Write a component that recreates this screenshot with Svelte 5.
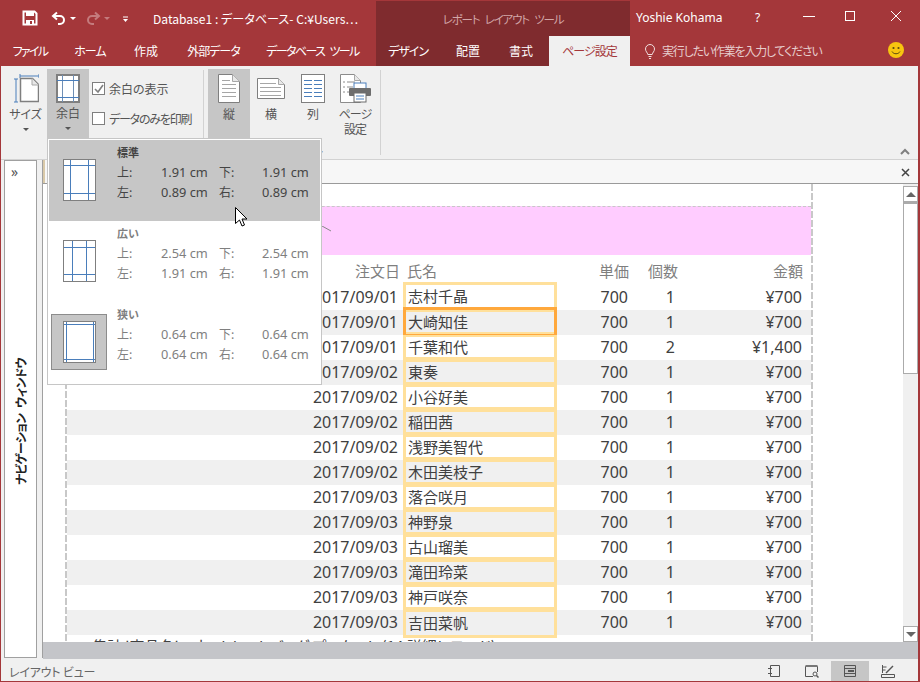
<script>
  const tabsLeft = [
    ['ファイル', 'w60 kana tight'], ['ホーム', 'w60 kana'], ['作成', 'w52'], ['外部データ', 'w83 kana'], ['データベース ツール', 'w115 kana']
  ];
  const tabsCtx = [['デザイン', 'w64 kana'], ['配置', 'w56'], ['書式', 'w53 nudge']];
  const names = ['志村千晶','大崎知佳','千葉和代','東奏','小谷好美','稲田茜','浅野美智代','木田美枝子','落合咲月','神野泉','古山瑠美','滝田玲菜','神戸咲奈','吉田菜帆'];
  const rows = names.map((name, i) => ({
    name,
    date: i < 3 ? '2017/09/01' : i < 8 ? '2017/09/02' : '2017/09/03',
    qty: i === 2 ? 2 : 1,
    amt: i === 2 ? '¥1,400' : '¥700'
  }));
  const margins = [
    { title: '標準', a: '1.91', b: '1.91', c: '0.89', d: '0.89', v: [7, 25], h: [6, 34], cls: 'hover' },
    { title: '広い', a: '2.54', b: '2.54', c: '1.91', d: '1.91', v: [9, 23], h: [7, 34], cls: '' },
    { title: '狭い', a: '0.64', b: '0.64', c: '0.64', d: '0.64', v: [3, 30], h: [3, 38], cls: 'current' }
  ];
</script>

<div class="win">
  <div class="titlebar">
    <div class="qat">
      <svg class="save" width="16" height="16" viewBox="0 0 16 16"><path d="M1.500 1.500h11l2 2v11h-13z" fill="none" stroke="#fff" stroke-width="2"/><rect x="4" y="2" width="8" height="4" fill="#fff"/><rect x="4" y="10" width="8" height="5" fill="#fff"/><rect x="8" y="11" width="2" height="3" fill="#a4373a"/></svg>
      <svg class="undo" width="16" height="14" viewBox="0 0 16 14"><path d="M6 1.500 2 5l4 3.500M2.500 5H9a4 4 0 0 1 0 8H7" fill="none" stroke="#fff" stroke-width="2"/></svg>
      <i class="drop"></i>
      <svg class="redo" width="16" height="14" viewBox="0 0 16 14"><path d="M10 1.500 14 5l-4 3.500M13.500 5H7a4 4 0 0 0 0 8h2" fill="none" stroke="#c47b7d" stroke-width="2"/></svg>
      <i class="drop dim"></i>
      <svg class="custom" width="7" height="7" viewBox="0 0 7 7"><path d="M1 1h5" stroke="#fff"/><path d="M1 3h5L3.500 6z" fill="#fff"/></svg>
    </div>
    <div class="doc-title">Database1 : データベース- C:¥Users⋯</div>
    <div class="ctx-title">レポート レイアウト ツール</div>
    <div class="user">Yoshie Kohama</div>
    <div class="help">?</div>
    <svg class="winbtns" width="108" height="14" viewBox="0 0 108 14"><path d="M0 7.500h12" stroke="#fff"/><rect x="42.500" y="2.500" width="9" height="9" fill="none" stroke="#fff"/><path d="M88 2l10 10M98 2 88 12" stroke="#fff" fill="none"/></svg>
  </div>

  <div class="tabs">
    {#each tabsLeft as t}<div class="tab {t[1]}">{t[0]}</div>{/each}
    <div class="tabgap"></div>
    {#each tabsCtx as t}<div class="tab ctx {t[1]}">{t[0]}</div>{/each}
    <div class="tab active kana">ページ設定</div>
    <svg class="bulb" width="12" height="15" viewBox="0 0 12 15"><path d="M3.800 10.500C3.500 8.500 1.500 7.500 1.500 5a4.500 4.500 0 0 1 9 0c0 2.500-2 3.500-2.300 5.500zM4.500 12.500h3M5 14.500h2" fill="none" stroke="#f1dfdf"/></svg>
    <div class="tell">実行したい作業を入力してください</div>
    <svg class="smile" width="16" height="16" viewBox="0 0 16 16"><circle cx="8" cy="8" r="8" fill="#f7c50f"/><circle cx="5.500" cy="6" r="1.100" fill="#5b4a10"/><circle cx="10.500" cy="6" r="1.100" fill="#5b4a10"/><path d="M4 9.500c1.500 3 6.500 3 8 0" fill="none" stroke="#5b4a10"/></svg>
  </div>

  <div class="ribbon">
    <div class="rbtn r-size">
      <svg width="26" height="30" viewBox="0 0 26 30"><path d="M7 2h19M7 0v4M26 0v4M3 5v23M1 5h4M1 28h4" stroke="#4a7ebb" fill="none"/><path d="M7.500 4.500h12l6 6v17h-18z" fill="#fff" stroke="#7f7f7f" stroke-width="1.500"/><path d="M19 4.500v6.500h6.500" fill="#e8e8e8" stroke="#a8a8a8"/></svg>
      <span>サイズ</span><i class="caret"></i>
    </div>
    <div class="rbtn r-margin pressed">
      <svg width="24" height="29" viewBox="0 0 24 29"><rect x="1" y="1" width="22" height="27" fill="#fff" stroke="#7f7f7f" stroke-width="2"/><path d="M6.500 1v27M17.500 1v27" stroke="#6f8fb5"/><path d="M1 6.500h22M1 23.500h22" stroke="#4a7ebb"/></svg>
      <span>余白</span><i class="caret"></i>
    </div>
    <div class="checks">
      <label class="chk"><span class="box"><svg width="12" height="12" viewBox="0 0 12 12"><path d="M2 6l3 3 5-7" fill="none" stroke="#7f7f7f" stroke-width="1.600"/></svg></span>余白の表示</label>
      <label class="chk kana narrow"><span class="box"></span>データのみを印刷</label>
    </div>
    <div class="sep s1"></div>
    <div class="rbtn r-o pressed">
      <svg width="22" height="29" viewBox="0 0 22 29"><path d="M.5.500h14l7 7v21H.5z" fill="#fff" stroke="#7f7f7f"/><path d="M14.500.500v7h7" fill="#e8e8e8" stroke="#a8a8a8"/><path d="M4 6.500h8M4 10.500h14M4 14.500h14M4 18.500h14M4 22.500h14" stroke="#a6a6a6"/></svg>
      <span>縦</span>
    </div>
    <div class="rbtn r-o">
      <svg width="28" height="21" viewBox="0 0 28 21"><path d="M.5.500h21l6 6v14H.5z" fill="#fff" stroke="#7f7f7f"/><path d="M21.500.500v6h6" fill="#e8e8e8" stroke="#a8a8a8"/><path d="M3 5.500h16M3 9.500h21M3 13.500h21M3 17.500h21" stroke="#a6a6a6"/></svg>
      <span>横</span>
    </div>
    <div class="rbtn r-o">
      <svg width="24" height="29" viewBox="0 0 24 29"><rect x=".5" y=".5" width="23" height="28" fill="#fff" stroke="#7f7f7f"/><path d="M3 6.500h8M13 6.500h8M3 10.500h8M13 10.500h8M3 14.500h8M13 14.500h8M3 18.500h8M13 18.500h8M3 22.500h8M13 22.500h8" stroke="#4a7ebb" stroke-width="1.200"/></svg>
      <span>列</span>
    </div>
    <div class="rbtn r-o">
      <svg class="setup" width="32" height="29" viewBox="0 0 32 29"><path d="M.5.500h14l6 6v22H.5z" fill="#fff" stroke="#8c8c8c"/><path d="M14.500.500v6h6" fill="#e8e8e8" stroke="#a8a8a8"/><path d="M3 8h2M7 8h8M3 13h2M7 13h6M3 18h2M7 18h6" stroke="#8c8c8c"/><rect x="14" y="9" width="12" height="7" fill="#fff" stroke="#4a7ebb"/><rect x="9" y="14" width="22" height="8" rx="1" fill="#6d6d6d"/><rect x="14" y="19" width="12" height="9" fill="#fff" stroke="#6d6d6d"/><path d="M16 22h8M16 25h8" stroke="#4a7ebb"/></svg>
      <span class="kana">ページ<br />設定</span>
    </div>
    <div class="sep s2"></div>
    <span class="grp kana">ページ レイアウト</span>
    <svg class="collapse" width="10" height="7" viewBox="0 0 10 7"><path d="M1 6l4-4 4 4" fill="none" stroke="#7f7f7f" stroke-width="2"/></svg>
  </div>

  <div class="body">
    <div class="nav">
      <div class="nav-box">
        <div class="chev">»</div>
        <div class="nav-text">ナビゲーション ウィンドウ</div>
      </div>
      <div class="nav-edge"></div>
    </div>
    <div class="work">
      <div class="strip"><i class="tabedge"></i><svg class="strip-x" width="9" height="9" viewBox="0 0 9 9"><path d="M1 1l7 7M8 1 1 8" stroke="#444" stroke-width="1.500"/></svg></div>
      <div class="docrow">
        <div class="canvas">
          <div class="page">
            <div class="band"><svg class="tick" width="10" height="6" viewBox="0 0 10 6"><path d="M0 0l9 5" stroke="#888"/></svg></div>
            <div class="grid head">
              <div class="c-date">注文日</div><div class="c-name">氏名</div><div class="c-num">単価</div><div class="c-qty">個数</div><div class="c-amt">金額</div>
            </div>
            {#each rows as r, i}
              <div class="grid row" class:odd={i % 2 === 1}>
                <div class="c-date">{r.date}</div>
                <div class="name" class:first={i === 0} class:last={i === rows.length - 1} class:sel={i === 1}>{r.name}</div>
                <div class="c-num">700</div>
                <div class="c-qty">{r.qty}</div>
                <div class="c-amt">{r.amt}</div>
              </div>
            {/each}
            <div class="foot">集計 '商品名' = ネットトートバッグ プーケット (14 詳細レコード)</div>
          </div>
        </div>
        <div class="scroll">
          <div class="sb-btn"><i class="up"></i></div>
          <div class="thumb"></div>
          <div class="sb-track"></div>
          <div class="sb-btn"><i class="down"></i></div>
        </div>
      </div>
      <div class="greyband"></div>
    </div>
  </div>

  <div class="status">
    <span class="st-text">レイアウト ビュー</span>
    <div class="views">
      <div class="vw"><svg width="14" height="14" viewBox="0 0 14 14"><path d="M3.500 1.500h9v11h-9zM1 4.500h4M1 9.500h4" fill="none" stroke="#555"/></svg></div>
      <div class="vw"><svg width="15" height="14" viewBox="0 0 15 14"><path d="M.5 2.500h12V8M.5 2.500v10H8" fill="none" stroke="#555"/><path d="M.5 1h12v2H.5z" fill="#777"/><circle cx="10" cy="10" r="2" fill="none" stroke="#555"/><path d="M11.500 11.500l2 2" stroke="#555" stroke-width="1.500"/></svg></div>
      <div class="vw on"><svg width="14" height="14" viewBox="0 0 14 14"><path d="M1.500 1.500h11v11h-11zM1.500 4.500h11M1.500 9.500h11" fill="none" stroke="#555"/><path d="M5 7h6" stroke="#555" stroke-width="2"/></svg></div>
      <div class="vw"><svg width="14" height="14" viewBox="0 0 14 14"><path d="M1.500 1v8M1.500 3h4M1.500 6h3" fill="none" stroke="#555"/><path d="M5 9l7-7" stroke="#555" stroke-width="1.500"/><path d="M.5 10.500h13v3H.5z" fill="none" stroke="#555"/></svg></div>
    </div>
  </div>

  <div class="menu">
    {#each margins as m}
      <div class="item {m.cls}">
        <div class="thumb-box">
          <svg width="33" height="42" viewBox="0 0 33 42">
            <rect x=".5" y=".5" width="32" height="41" fill="#fff" stroke="#7f7f7f"/>
            {#each m.v as x}<path d="M{x + .5} 1v40" stroke="#4a7ebb" />{/each}
            {#each m.h as y}<path d="M1 {y + .5}h31" stroke="#4a7ebb" />{/each}
          </svg>
        </div>
        <div class="info">
          <div class="ti">{m.title}</div>
          <div class="kv"><span>上:</span><b>{m.a} cm</b><span>下:</span><b>{m.b} cm</b></div>
          <div class="kv"><span>左:</span><b>{m.c} cm</b><span>右:</span><b>{m.d} cm</b></div>
        </div>
      </div>
    {/each}
  </div>

  <svg class="cursor" width="13" height="20" viewBox="0 0 13 20"><path d="M.5.500v16l4-3.500 2.500 6 2.500-1-2.500-6H12z" fill="#fff" stroke="#000"/></svg>
</div>

<style>
  :global(body) { margin: 0; background: #f0f0f0; }
  .win {
    position: relative; width: 920px; height: 682px; overflow: hidden; box-sizing: border-box;
    font-family: "Noto Sans CJK JP", "Noto Sans", sans-serif; font-size: 12px; color: #444;
    font-feature-settings: "palt"; background: #f0f0f0;
    border: 1px solid #a4373a; border-top: 0; border-right-width: 2px;
  }
  .kana { letter-spacing: -1px; }
  .narrow { letter-spacing: -1.200px; }
  .titlebar { height: 36px; margin: 0 -2px 0 -1px; background: #a4373a; display: flex; align-items: center; color: #fff; }
  .qat { width: 153px; height: 36px; display: flex; align-items: center; flex: none; }
  .save { margin-left: 22px; }
  .undo { margin-left: 13px; }
  .drop { width: 0; height: 0; border: 3px solid transparent; border-top-color: #fff; border-bottom: 0; margin-left: 3px; }
  .drop.dim { border-top-color: #c47b7d; }
  .redo { margin-left: 9px; }
  .custom { margin-left: 12px; margin-top: 2px; }
  .doc-title { width: 223px; flex: none; white-space: nowrap; overflow: hidden; font-size: 12.100px; }
  .ctx-title { width: 254px; height: 36px; flex: none; background: #7f2b2e; border-top: 1px solid #a4373a; box-sizing: border-box; text-align: center; line-height: 36px; color: #d2a6a7; font-size: 11.500px; letter-spacing: -1.200px; word-spacing: 4px; }
  .user { width: 118px; flex: none; padding-left: 6px; box-sizing: border-box; font-family: "Noto Sans", sans-serif; font-size: 12px; margin-top: -2px; }
  .help { width: 49px; flex: none; font-family: "Noto Sans", sans-serif; margin-top: -2px; margin-left: 7px; }
  .winbtns { flex: none; margin-top: -4px; margin-left: -1px; }

  .tabs { height: 30px; margin: 0 -2px 0 -1px; background: #a4373a; display: flex; color: #fff; }
  .tab { flex: none; text-align: center; line-height: 30px; box-sizing: border-box; }
  .tabgap { width: 6px; flex: none; }
  .tight { letter-spacing: -1.700px; }
  .nudge { padding-right: 3px; }
  .w60 { width: 60px; } .w52 { width: 52px; } .w83 { width: 83px; }
  .w115 { width: 115px; letter-spacing: -1.600px; word-spacing: 4px; }
  .w64 { width: 64px; } .w56 { width: 56px; } .w53 { width: 53px; }
  .ctx { background: #7f2b2e; }
  .active { width: 81px; background: #f0f0f0; color: #a4373a; }
  .bulb { margin: 8px 0 0 14px; flex: none; }
  .tell { margin-left: 6px; width: 226px; flex: none; line-height: 30px; color: #e6cccc; letter-spacing: -1.200px; }
  .smile { flex: none; margin-top: 6px; }

  .ribbon { position: relative; height: 90px; border-bottom: 1px solid #d2d2d2; display: flex; align-items: flex-start; padding-top: 3px; }
  .rbtn { display: flex; flex-direction: column; align-items: center; height: 69px; box-sizing: border-box; flex: none; line-height: 15px; text-align: center; color: #555; }
  .r-size { width: 41px; margin-left: 4px; padding-top: 5px; }
  .r-size span { margin-top: 2px; }
  .r-margin { width: 42px; margin-left: 1px; padding-top: 5px; }
  .r-margin span { margin-top: 2px; }
  .pressed { background: #c6c6c6; }
  .caret { width: 0; height: 0; border: 3px solid transparent; border-top-color: #555; border-bottom: 0; margin-top: 7px; }
  .checks { width: 111px; margin-left: 3px; padding-top: 10px; flex: none; }
  .chk { display: flex; align-items: center; height: 18px; margin-bottom: 12px; gap: 4px; color: #555; }
  .box { width: 11px; height: 11px; border: 1px solid #7f7f7f; background: #fff; display: block; flex: none; }
  .box svg { display: block; }
  .sep { width: 1px; height: 85px; background: #d2d2d2; flex: none; margin-top: 1px; }
  .r-o { width: 42px; padding-top: 5px; position: relative; }
  .r-o svg { height: 29px; }
  .r-o svg.setup { margin-left: 2px; }
  .r-o span { position: absolute; top: 37px; left: 0; right: 0; }
  .s1 { margin-right: 4px; }
  .s2 { margin-left: 4px; }
  .grp { position: absolute; left: 240px; top: 76px; color: #777; font-size: 12px; }
  .collapse { position: absolute; right: 8px; top: 82px; }

  .body { display: flex; height: 499px; }
  .nav { width: 42px; flex: none; display: flex; padding: 0 0 1px 3px; box-sizing: border-box; }
  .nav-box { width: 34px; background: #fff; border: 1px solid #a0a0a0; box-sizing: border-box; position: relative; }
  .nav-edge { width: 5px; background: #f0f0f0; border-right: 1px solid #a0a0a0; }
  .chev { position: absolute; top: 3px; left: 6px; font-size: 14px; line-height: 15px; color: #555; font-family: "Noto Sans", sans-serif; }
  .nav-text {
    position: absolute; top: 197px; left: 7px; height: 127px; writing-mode: vertical-rl; text-orientation: sideways; transform: rotate(180deg);
    font-weight: 700; font-size: 12px; line-height: 18px; color: #222; white-space: nowrap; text-align: center; letter-spacing: -.8px; word-spacing: 4px;
  }
  .work { flex: 1; min-width: 0; display: flex; flex-direction: column; }
  .strip { height: 24px; flex: none; background: #f7f7f7; border-bottom: 1px solid #9a9a9a; box-sizing: border-box; position: relative; }
  .tabedge { position: absolute; left: 0; top: 0; bottom: 0; width: 2px; background: #d9c9a9; }
  .strip-x { position: absolute; right: 8px; top: 8px; }
  .docrow { height: 458px; flex: none; display: flex; background: #fff; overflow: hidden; }
  .canvas { flex: 1; min-width: 0; overflow: hidden; padding-left: 22px; }
  .page {
    width: 748px; height: 458px; box-sizing: border-box; padding: 22px 2px 0 2px;
    background-image:
      repeating-linear-gradient(to bottom, #c8c8c8 0 7px, transparent 7px 9px),
      repeating-linear-gradient(to bottom, #c8c8c8 0 7px, transparent 7px 9px);
    background-size: 2px 100%, 2px 100%; background-position: left top, right top; background-repeat: no-repeat;
  }
  .band {
    height: 49px; margin: 0 0 0 -1px; position: relative; background: #ffccff; box-sizing: border-box;
    border-top: 1px dashed #c8c8c8;
  }
  .tick { position: absolute; left: 256px; top: 19px; }
  .grid { display: grid; grid-template-columns: 333px 157px 72px 49px 125px; font-size: 16px; color: #404040; font-family: "Noto Sans", "Noto Sans CJK JP", sans-serif; font-feature-settings: normal; }
  .grid > div { box-sizing: border-box; }
  .head { height: 30px; align-items: center; color: #7f7f7f; font-family: "Noto Sans CJK JP", sans-serif; font-size: 15px; }
  .head .c-name { padding-left: 7px; }
  .row { height: 25px; line-height: 25px; }
  .row.odd { background: #f0f0f0; }
  .c-date, .c-num, .c-qty, .c-amt { text-align: right; }
  .row .c-date { padding-right: 2px; }
  .row .c-num { padding-right: 1px; }
  .row .c-qty { padding-right: 3px; }
  .row .c-amt { padding-right: 1px; }
  .name {
    height: 25px; line-height: 20px; position: relative; align-self: start;
    border: 3px solid #ffe09b; border-top-width: 2px; padding-left: 2px; margin-left: 3px;
    font-family: "Noto Sans CJK JP", sans-serif; font-size: 15px;
  }
  .name.first { margin-top: -3px; height: 28px; border-top-width: 3px; line-height: 21px; }
  .name.last { height: 28px; line-height: 22px; }
  .name.sel::after { content: ""; position: absolute; left: -3px; right: -3px; top: -5px; bottom: -5px; border: 3px solid #ffa83c; }
  .foot { padding-left: 25px; font-size: 15px; line-height: 22px; color: #404040; white-space: nowrap; position: relative; }
  .scroll { width: 15px; flex: none; display: flex; flex-direction: column; padding-top: 2px; background: #f0f0f0; box-sizing: border-box; height: 458px; }
  .sb-btn { height: 16px; background: #fff; border: 1px solid #ababab; box-sizing: border-box; display: flex; align-items: center; justify-content: center; flex: none; }
  .up { width: 0; height: 0; border: 5px solid transparent; border-bottom-color: #666; border-top: 0; }
  .down { width: 0; height: 0; border: 5px solid transparent; border-top-color: #666; border-bottom: 0; }
  .thumb { height: 172px; background: #fff; border: 1px solid #ababab; border-top: 2px solid #ababab; box-sizing: border-box; flex: none; }
  .sb-track { flex: 1; }
  .greyband { flex: 1; background: #c4c5c9; }

  .status { height: 22px; margin-top: 1px; display: flex; align-items: center; background: #f0f0f0; }
  .st-text { margin-left: 8px; color: #666; font-size: 12px; letter-spacing: -.2px; }
  .views { margin-left: auto; display: flex; margin-right: 11px; height: 21px; }
  .vw { width: 38px; display: flex; align-items: center; justify-content: center; }
  .vw.on { background: #c6c6c6; }

  .menu { position: absolute; left: 46px; top: 138px; width: 275px; height: 247px; box-sizing: border-box; background: #fff; border: 1px solid #c6c6c6; padding: 1px; }
  .item { display: flex; height: 81px; color: #7f7f7f; }
  .item.hover { background: #c6c6c6; color: #444; }
  .thumb-box { width: 56px; height: 56px; margin: 12px 10px 0 2px; display: flex; align-items: center; justify-content: center; box-sizing: border-box; flex: none; }
  .current .thumb-box { background: #c6c6c6; border: 1px solid #8c8c8c; }
  .thumb-box svg { display: block; }
  .info { padding-top: 2px; }
  .ti { height: 20px; line-height: 20px; font-size: 11px; font-weight: 700; }
  .kv { display: grid; grid-template-columns: 44px 58px 43px 50px; height: 20px; line-height: 20px; font-size: 12px; }
  .kv b { font-weight: 400; font-family: "Noto Sans", sans-serif; font-size: 12.800px; white-space: nowrap; }
  .cursor { position: absolute; left: 234px; top: 207px; }
</style>
